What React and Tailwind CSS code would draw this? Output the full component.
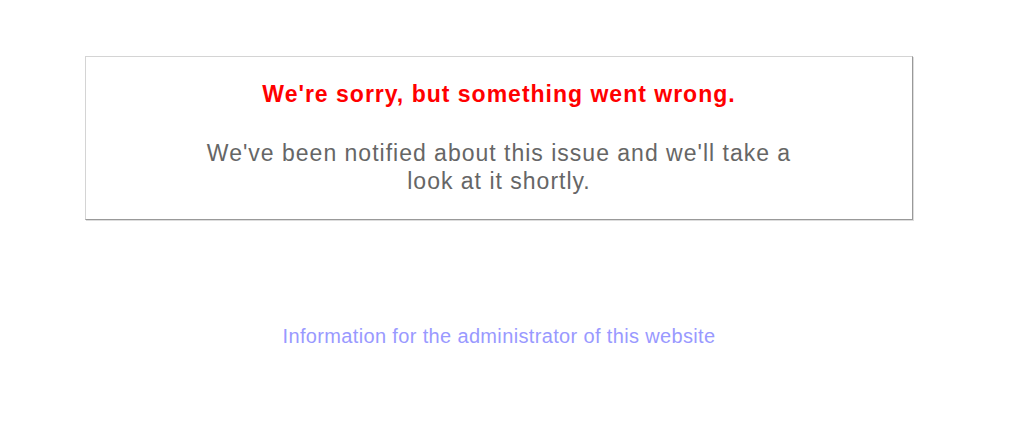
import React from 'react';

const ErrorPage = () => {
  return (
    <div className="min-h-[436px] bg-white font-['Liberation_Sans',Arial,sans-serif] pt-[56px]">
      <div className="ml-[85px] w-[828px] h-[164px] border border-[#d4d4d4] border-r-[#999] border-b-[#999] shadow-[1px_1px_0_#ddd] flex flex-col items-center pt-[22px]">
        <h1 className="text-[23px] leading-[30px] tracking-[1px] font-bold text-[#f00]">
          We're sorry, but something went wrong.
        </h1>
        <p className="mt-[30px] w-[610px] text-center text-[23px] leading-[28px] tracking-[1px] text-[#666]">
          We've been notified about this issue and we'll take a look at it shortly.
        </p>
      </div>
      <div className="ml-[85px] w-[828px] mt-[104px] text-center">
        <a href="#" className="text-[20px] leading-[24px] tracking-[0.35px] text-[#99f]">
          Information for the administrator of this website
        </a>
      </div>
    </div>
  );
};

export default ErrorPage;
